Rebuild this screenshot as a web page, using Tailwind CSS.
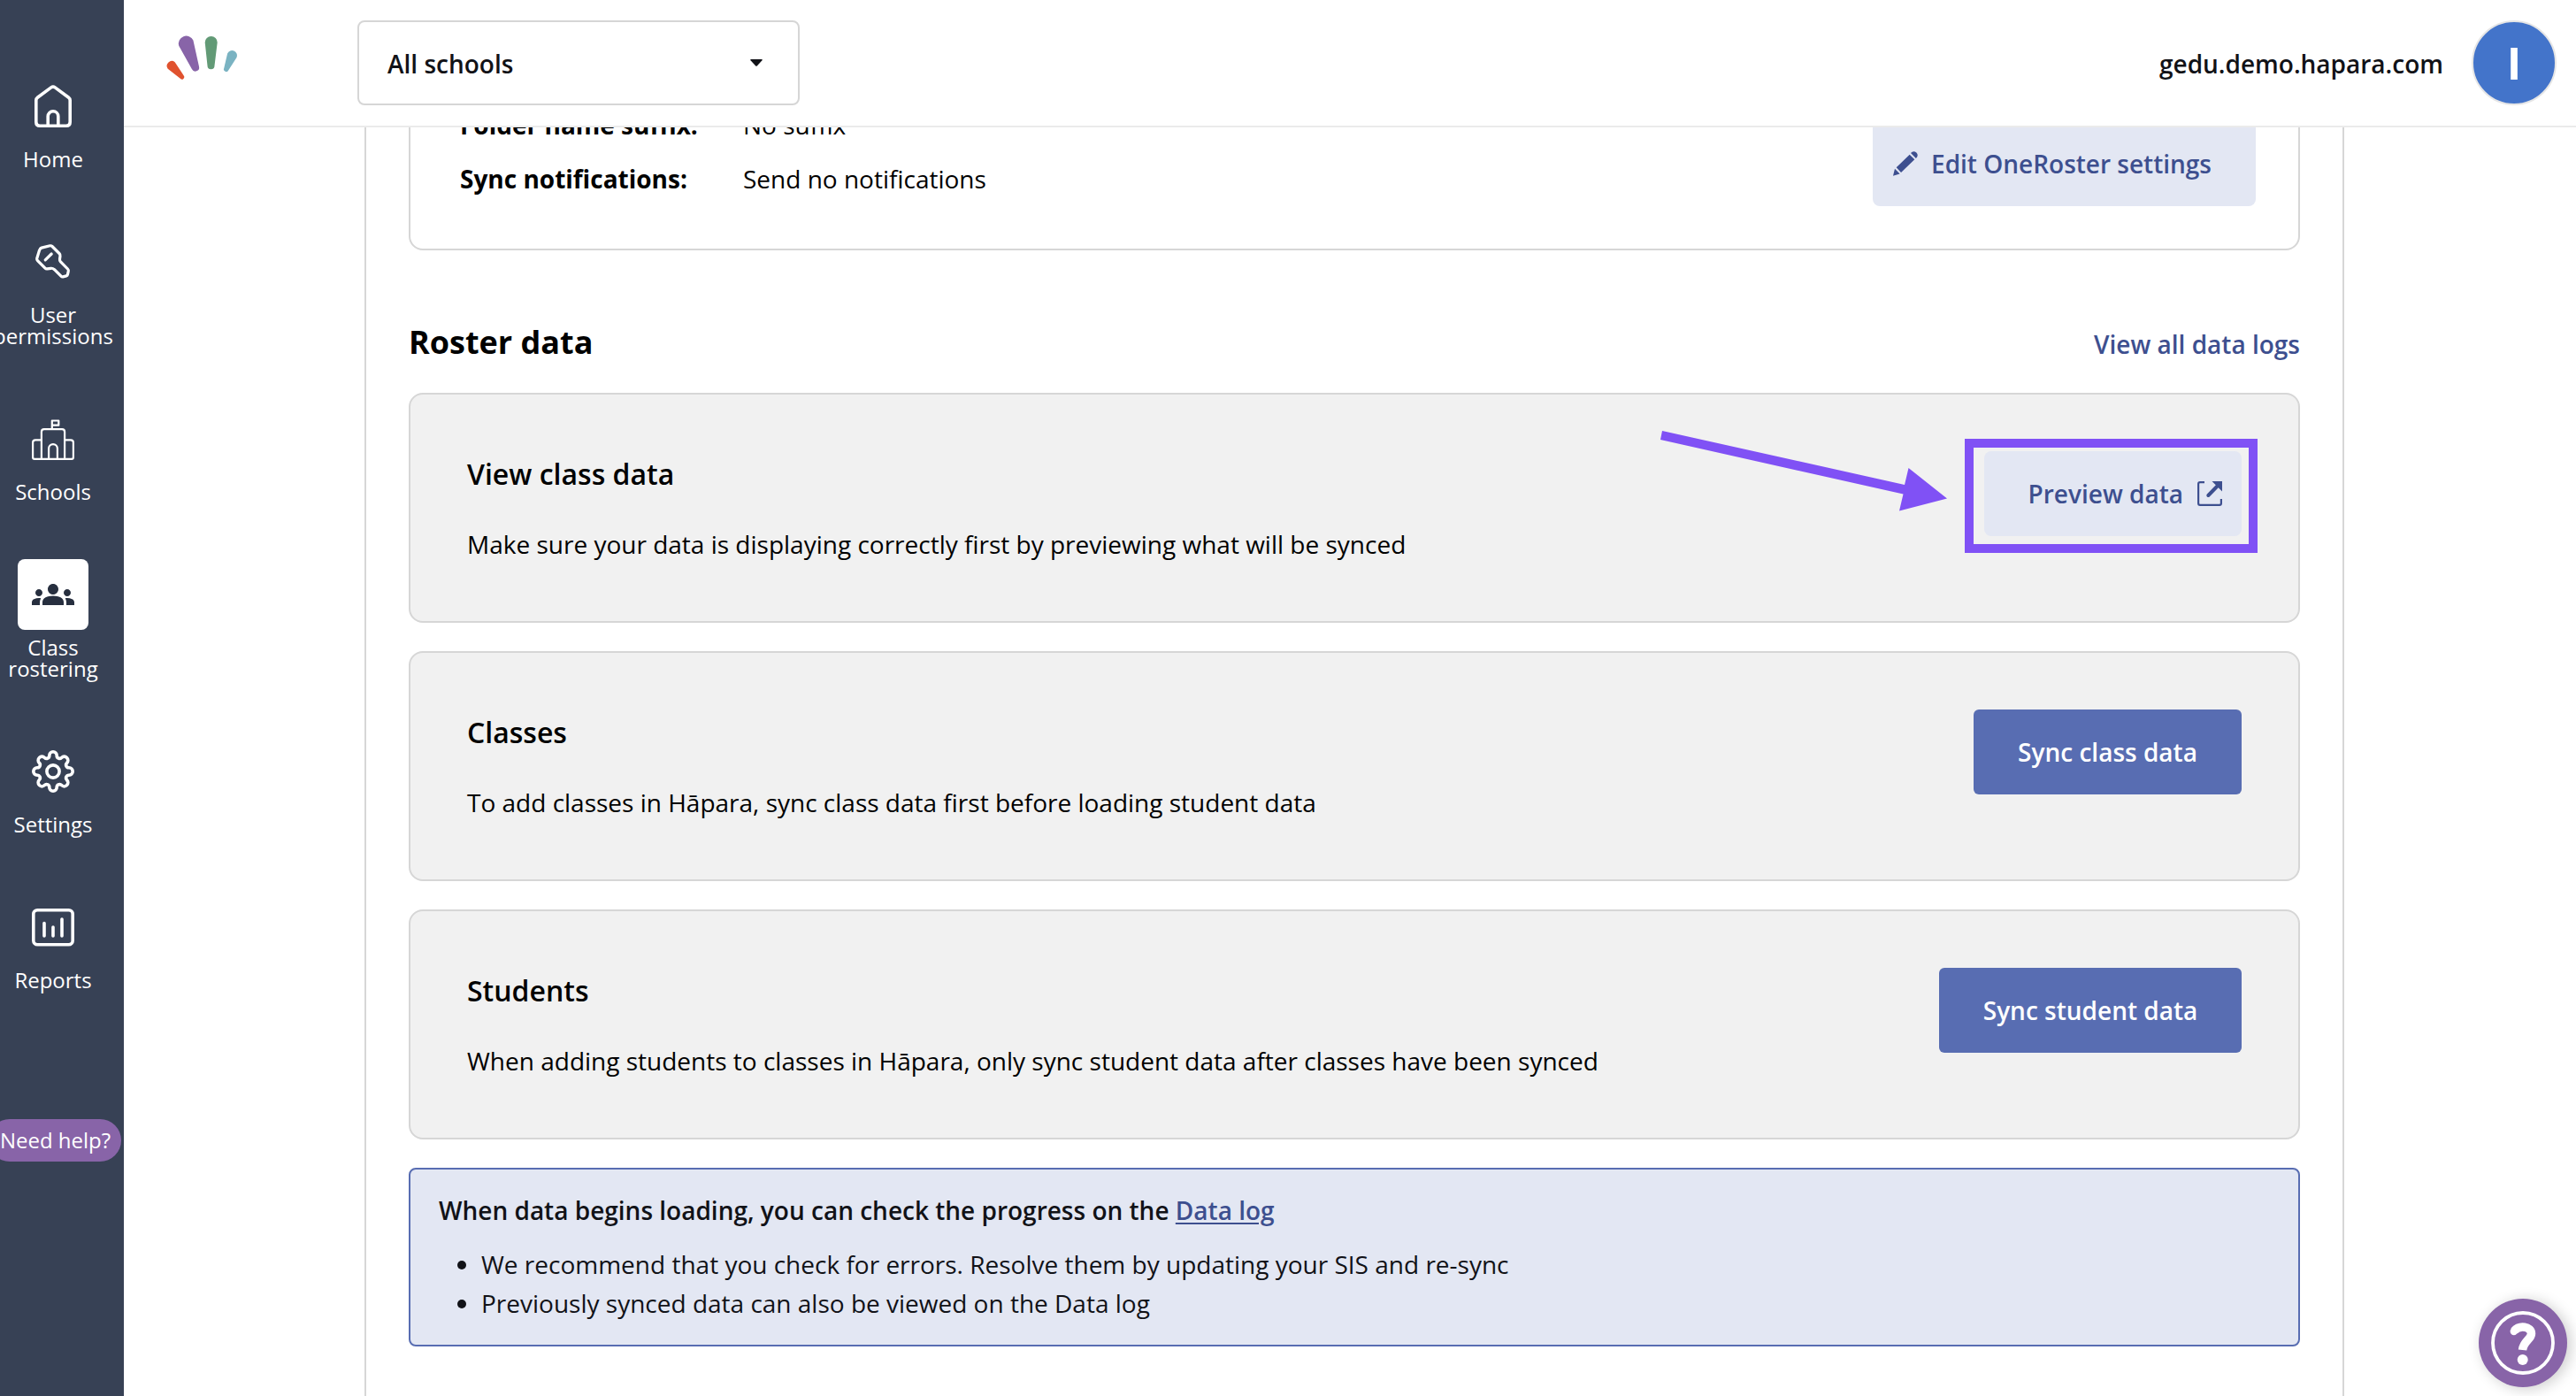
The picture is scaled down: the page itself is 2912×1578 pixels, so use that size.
<!DOCTYPE html>
<html lang="en">

<head>
    <meta charset="utf-8" />
    <meta name="viewport" content="width=device-width,initial-scale=1" />

    <title>Class rostering</title>

    <script src="https://cdn.jsdelivr.net/npm/@tailwindcss/browser@4"></script>
</head>

<body class="flex h-screen overflow-hidden bg-white font-['Open_Sans',sans-serif] text-[28px] text-black">
    <!-- Sidebar -->
    <nav class="flex w-[140px] shrink-0 flex-col overflow-hidden bg-[#374155] pt-20 text-2xl leading-6 text-white">
        <ul class="flex w-[120px] flex-col items-center gap-16 text-center whitespace-nowrap">
            <li class="flex flex-col items-center gap-2">
                <span class="flex size-20 items-center justify-center">
                    <svg class="size-12" viewBox="0 0 48 48" fill="none" stroke="currentColor" stroke-width="3.6" stroke-linejoin="round">
                        <path d="M4.8 17.5Q4.8 15.5 6.4 14.3L21.8 2.9Q24 1.3 26.2 2.9L41.6 14.3Q43.2 15.5 43.2 17.5V42Q43.2 46.2 39 46.2H9Q4.8 46.2 4.8 42Z" />
                        <path d="M18.2 46V35.5a5.8 5.8 0 0 1 11.6 0V46" />
                    </svg>
                </span>
                <span>Home</span>
            </li>
            <li class="flex flex-col items-center gap-2">
                <span class="flex size-20 items-center justify-center">
                    <svg class="size-12" viewBox="0 0 48 48" fill="none" stroke="currentColor" stroke-width="3.2" stroke-linejoin="round" stroke-linecap="round">
                        <path d="M9.5 9.2Q10 8.4 11 8.1L20.5 5.8Q22 5.5 23 6.5L31 14.5Q32.3 15.8 32 17.5L31.5 21Q31.3 22.5 32.5 23.8L40.5 32Q41.7 33.2 41.3 34.5L40.5 38.2Q40.2 39.6 39 39.9L35.2 40.9Q34 41.2 33 40.2L25.5 32.7Q23.5 31 21.5 31.3L17.5 31.9Q16 32.2 15 31.2L6.5 22.7Q5.5 21.7 5.7 20.3L8.5 11Z" />
                        <path d="M15.2 21.8L22.2 15" />
                    </svg>
                </span>
                <span>User<br>permissions</span>
            </li>
            <li class="flex flex-col items-center gap-2">
                <span class="flex size-20 items-center justify-center">
                    <svg class="size-12" viewBox="0 0 48 48" fill="none" stroke="currentColor" stroke-width="2.2" stroke-linejoin="round">
                        <path d="M10.9 46.9H3Q1.1 46.9 1.1 45V28.3Q1.1 25.3 4.1 25.3H10.9M37.1 25.3H43.9Q46.9 25.3 46.9 28.3V45Q46.9 46.9 45 46.9H37.1" />
                        <path d="M10.9 46.9V16.2Q10.9 13.2 13.9 13.2H34.1Q37.1 13.2 37.1 16.2V46.9Z" />
                        <path d="M19.1 46.9V35a4.9 4.9 0 0 1 9.8 0V46.9M22.8 13V3.5H30.3V8.7H22.8" />
                    </svg>
                </span>
                <span>Schools</span>
            </li>
            <li class="flex flex-col items-center gap-2">
                <span class="flex size-20 items-center justify-center rounded-lg bg-white text-[#272f3f]">
                    <svg class="size-12" viewBox="0 0 24 24" fill="currentColor">
                        <path d="M12 12.75c1.63 0 3.07.39 4.24.9 1.08.48 1.76 1.56 1.76 2.73V18H6v-1.61c0-1.18.68-2.26 1.76-2.73 1.17-.52 2.61-.91 4.24-.91zM4 13c1.1 0 2-.9 2-2s-.9-2-2-2-2 .9-2 2 .9 2 2 2zm1.13 1.1c-.37-.06-.74-.1-1.13-.1-.99 0-1.93.21-2.78.58C.48 14.9 0 15.62 0 16.43V18h4.5v-1.61c0-.83.23-1.61.63-2.29zM20 13c1.1 0 2-.9 2-2s-.9-2-2-2-2 .9-2 2 .9 2 2 2zm4 3.43c0-.81-.48-1.53-1.22-1.85-.85-.37-1.79-.58-2.78-.58-.39 0-.76.04-1.13.1.4.68.63 1.46.63 2.29V18H24v-1.57zM12 6c1.66 0 3 1.34 3 3s-1.34 3-3 3-3-1.34-3-3 1.34-3 3-3z" />
                    </svg>
                </span>
                <span>Class<br>rostering</span>
            </li>
            <li class="flex flex-col items-center gap-2">
                <span class="flex size-20 items-center justify-center">
                    <svg class="size-12" viewBox="-24 -24 48 48" fill="none" stroke="currentColor" stroke-width="3.6" stroke-linejoin="round">
                        <path d="M-4.2 -18A4.2 4.2 0 0 1 4.2 -18A3.15 3.15 0 0 0 9.6 -15.6A4.2 4.2 0 0 1 15.6 -9.6A3.15 3.15 0 0 0 18 -4.2A4.2 4.2 0 0 1 18 4.2A3.15 3.15 0 0 0 15.6 9.6A4.2 4.2 0 0 1 9.6 15.6A3.15 3.15 0 0 0 4.2 18A4.2 4.2 0 0 1 -4.2 18A3.15 3.15 0 0 0 -9.6 15.6A4.2 4.2 0 0 1 -15.6 9.6A3.15 3.15 0 0 0 -18 4.2A4.2 4.2 0 0 1 -18 -4.2A3.15 3.15 0 0 0 -15.6 -9.6A4.2 4.2 0 0 1 -9.6 -15.6A3.15 3.15 0 0 0 -4.2 -18Z" />
                        <circle r="7.1" />
                    </svg>
                </span>
                <span>Settings</span>
            </li>
            <li class="flex flex-col items-center gap-2">
                <span class="flex size-20 items-center justify-center">
                    <svg class="size-12" viewBox="0 0 48 48" fill="none" stroke="currentColor" stroke-width="3.6" stroke-linecap="round">
                        <rect x="1.8" y="4.8" width="44.4" height="39" rx="4.5" />
                        <path d="M14 19.5V34M24 24V34M34 15V34" />
                    </svg>
                </span>
                <span>Reports</span>
            </li>
        </ul>
        <button class="mt-[145px] -ml-[13px] h-12 w-[150px] shrink-0 rounded-full bg-[#8864a8] pl-px whitespace-nowrap">Need help?</button>
    </nav>

    <div class="flex min-w-0 grow flex-col">
        <!-- Top bar -->
        <header class="flex h-36 shrink-0 items-center border-b-2 border-[#ebebeb] pr-[22px] pl-[46px] font-semibold text-[#111217]">
            <svg class="mb-3 h-[54px] w-[84px]" viewBox="0 0 84 54">
                <path fill="#e0522f" d="M3.7 39.7A5.5 5.5 0 0 1 11.7 32.3L21.6 47.2A2.6 2.6 0 0 1 17.8 50.8Z" />
                <path fill="#8864a8" d="M16.2 13.8A8.7 8.7 0 0 1 32.4 7.6L39 37.2A4.3 4.3 0 0 1 31 40.2Z" />
                <path fill="#629a76" d="M45.7 10A7 7 0 0 1 59.7 10L56.5 36.3A4 4 0 0 1 48.5 36.3Z" />
                <path fill="#7ab3c2" d="M71.1 22.5A5.6 5.6 0 0 1 81.5 26.9L72.2 41.4A2.7 2.7 0 0 1 67.2 39.2Z" />
            </svg>
            <button class="ml-[134px] flex h-24 w-[500px] items-center justify-between rounded-lg border-2 border-[#d6d6d6] pr-10 pl-8">
                <span class="pt-px">All schools</span>
                <svg class="h-2 w-3.5" viewBox="0 0 14 8" fill="currentColor">
                    <path d="M1 0H13Q14.5 0 13.5 1.2L8 7.3Q7 8.4 6 7.3L.5 1.2Q-.5 0 1 0Z" />
                </svg>
            </button>
            <span class="ml-auto pt-px">gedu.demo.hapara.com</span>
            <span class="ml-8 flex size-24 items-center justify-center rounded-full border-2 border-[#e6e6e6] bg-[#4374ca] text-[50px] leading-none font-bold text-white">I</span>
        </header>

        <div class="grow overflow-hidden">
            <main class="-mt-[83px] ml-[272px] h-[1700px] w-[2238px] border-x-2 border-[#d6d6d6] px-12">
                <!-- OneRoster settings -->
                <section class="flex items-end justify-between rounded-2xl border-2 border-[#d6d6d6] p-12">
                    <dl class="grid grid-cols-[320px_auto] pl-2 leading-[61px]">
                        <dt class="font-bold">Folder name suffix:</dt>
                        <dd>No suffix</dd>
                        <dt class="font-bold">Sync notifications:</dt>
                        <dd>Send no notifications</dd>
                    </dl>
                    <button class="flex h-24 items-center gap-[15px] rounded-lg bg-[#e3e7f3] pr-[50px] pl-[23px] font-semibold text-[#3d4f8f]">
                        <svg class="size-7" viewBox="0 0 28 28" fill="currentColor">
                            <path d="M0 27.7L2 19.7L7.6 25.4ZM3.7 18.3L18.7 3.7L24.3 9.3L9 23.9ZM20 1.9Q23 -1.2 26.4 1.6Q29.3 4.9 25.9 7.9Z" />
                        </svg>
                        Edit OneRoster settings
                    </button>
                </section>

                <!-- Roster data -->
                <div class="mt-[71px] mb-6 flex h-[66px] items-baseline justify-between leading-[66px]">
                    <h2 class="text-4xl leading-[66px] font-bold">Roster data</h2>
                    <a class="font-semibold text-[#3d4f8f]">View all data logs</a>
                </div>
                <div class="flex flex-col gap-8">
                    <section class="relative flex h-[260px] items-start justify-between rounded-2xl border-2 border-[#d6d6d6] bg-[#f1f1f1] p-16">
                        <div>
                            <h3 class="text-[32px] leading-[52px] font-semibold">View class data</h3>
                            <p class="mt-[29px] leading-[48px]">Make sure your data is displaying correctly first by previewing what will be synced</p>
                        </div>
                        <button class="flex h-24 items-center gap-4 rounded-lg bg-[#e3e7f3] pr-[22px] pl-[50px] font-semibold text-[#3d4f8f]">
                            Preview data
                            <svg class="size-7" viewBox="0 0 28 28" fill="none" stroke="currentColor" stroke-width="2.2">
                                <path d="M8 1.1H3Q1.1 1.1 1.1 3V25Q1.1 26.9 3 26.9H25Q26.9 26.9 26.9 25V20" />
                                <path d="M12.3 16L23 5" stroke-width="4" stroke-linecap="round" />
                                <path d="M16.5 0H28V11.5Z" fill="currentColor" stroke="none" />
                            </svg>
                        </button>
                        <!-- Callout box and arrow over the card -->
                        <div class="absolute top-[50px] right-[46px] h-[129px] w-[331px] border-10 border-[#8051f5]"></div>
                        <svg class="absolute top-[38px] right-[394px] h-[96px] w-[330px]" viewBox="1874 484 330 96" fill="#8051f5">
                            <path d="M1879 487L2153 548L2157.5 529L2201 563.5L2147 577.5L2151.5 558.5L1877 497Z" />
                        </svg>
                    </section>
                    <section class="flex h-[260px] items-start justify-between rounded-2xl border-2 border-[#d6d6d6] bg-[#f1f1f1] p-16">
                        <div>
                            <h3 class="text-[32px] leading-[52px] font-semibold">Classes</h3>
                            <p class="mt-[29px] leading-[48px]">To add classes in Hāpara, sync class data first before loading student data</p>
                        </div>
                        <button class="h-24 w-[303px] rounded-md bg-[#586db2] font-semibold text-white">Sync class data</button>
                    </section>
                    <section class="flex h-[260px] items-start justify-between rounded-2xl border-2 border-[#d6d6d6] bg-[#f1f1f1] p-16">
                        <div>
                            <h3 class="text-[32px] leading-[52px] font-semibold">Students</h3>
                            <p class="mt-[29px] leading-[48px]">When adding students to classes in Hāpara, only sync student data after classes have been synced</p>
                        </div>
                        <button class="h-24 w-[342px] rounded-md bg-[#586db2] font-semibold text-white">Sync student data</button>
                    </section>
                    <section class="h-[202px] rounded-lg border-2 border-[#586db2] bg-[#e3e7f3] px-8 py-6 leading-[44px] text-[#111217]">
                        <p class="font-semibold">When data begins loading, you can check the progress on the <a class="text-[#3d4f8f] underline decoration-2 underline-offset-3">Data log</a></p>
                        <ul class="mt-[17px] pl-[21px]">
                            <li class="flex items-center gap-[17px]"><span class="mt-0.5 size-2.5 rounded-full bg-[#111217]"></span>We recommend that you check for errors. Resolve them by updating your SIS and re-sync</li>
                            <li class="flex items-center gap-[17px]"><span class="mt-0.5 size-2.5 rounded-full bg-[#111217]"></span>Previously synced data can also be viewed on the Data log</li>
                        </ul>
                    </section>
                </div>
            </main>
        </div>
    </div>

    <!-- Help button -->
    <button class="fixed right-2.5 bottom-2.5 size-[100px] rounded-full bg-[#8864a8] text-white shadow-[4px_2px_16px_rgba(0,0,0,0.2)]">
        <svg class="size-[100px]" viewBox="0 0 100 100" fill="none" stroke="currentColor">
            <circle cx="50" cy="50" r="34" stroke-width="3.8" />
            <path d="M40 36.5C46 29.5 59.5 31 59.5 39.5C59.5 46 50.5 48 49.5 58" stroke-width="9.5" />
            <circle cx="39.8" cy="37" r="4.2" fill="currentColor" stroke="none" />
            <circle cx="49.7" cy="69" r="6" fill="currentColor" stroke="none" />
        </svg>
    </button>
</body>

</html>
